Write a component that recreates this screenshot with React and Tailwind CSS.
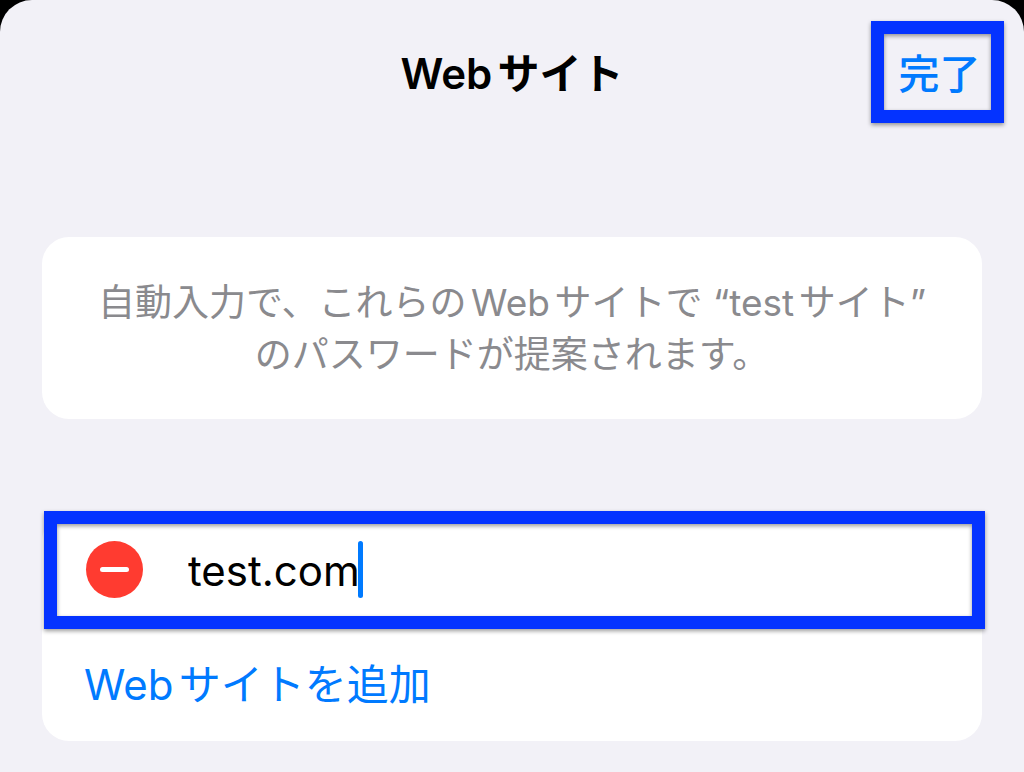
import { useState } from "react";

function Highlight({ className }) {
  return (
    <span
      aria-hidden="true"
      className={`pointer-events-none absolute border-[13px] border-[#0433ff] drop-shadow-[0_2px_2px_rgba(0,0,0,0.4)] ${className}`}
    ></span>
  );
}

function Header() {
  return (
    <header className="grid grid-cols-[1fr_auto_1fr] items-center px-5 pt-[21px]">
      <h1 className="col-start-2 pt-1 text-[42px] leading-[56px] font-semibold text-black">
        Webサイト
      </h1>
      <button
        type="button"
        className="relative h-[102px] w-[133px] justify-self-end pt-1 pl-1 text-[41px] leading-[56px] font-medium text-[#007aff]"
      >
        完了
        <Highlight className="inset-0" />
      </button>
    </header>
  );
}

function WebsiteRow({ value, onChange }) {
  return (
    <div className="relative flex h-[110px] items-center pl-11">
      <button
        type="button"
        aria-label="削除"
        className="flex size-[57px] items-center justify-center rounded-full bg-[#ff3b30]"
      >
        <span className="h-[5px] w-[29px] rounded-full bg-white"></span>
      </button>
      <input
        type="text"
        aria-label="Webサイト"
        value={value}
        onChange={(e) => onChange(e.target.value)}
        className="ml-[45px] field-sizing-content h-14 pt-0.5 text-[42px] text-black caret-transparent outline-none"
      />
      <span className="-ml-[2px] h-[57px] w-[5px] rounded-full bg-[#007aff]"></span>
      <Highlight className="-top-[3px] -right-[3px] -bottom-[5px] left-[2px]" />
    </div>
  );
}

export default function App() {
  const [site, setSite] = useState("test.com");

  return (
    <div className="bg-black">
      <div
        lang="ja"
        className="min-h-screen rounded-t-[32px] bg-[#f2f1f7] pb-8 font-['Inter','Noto_Sans_CJK_JP',sans-serif] [text-autospace:normal]"
      >
        <Header />
        <main className="px-[42px] pt-[114px]">
          <section className="rounded-[27px] bg-white px-8 pt-10 pb-[38px] text-center text-[37px] leading-[52px] text-[#8a8a8e]">
            <p>
              自動入力で、これらのWebサイトで “testサイト”
              <br />
              のパスワードが提案されます。
            </p>
          </section>

          <section className="mt-[95px] rounded-[27px] bg-white">
            <WebsiteRow value={site} onChange={setSite} />
            <button
              type="button"
              className="flex h-[117px] w-full items-center pt-1 pl-[42px] text-left text-[42px] text-[#007aff]"
            >
              Webサイトを追加
            </button>
          </section>
        </main>
      </div>
    </div>
  );
}
